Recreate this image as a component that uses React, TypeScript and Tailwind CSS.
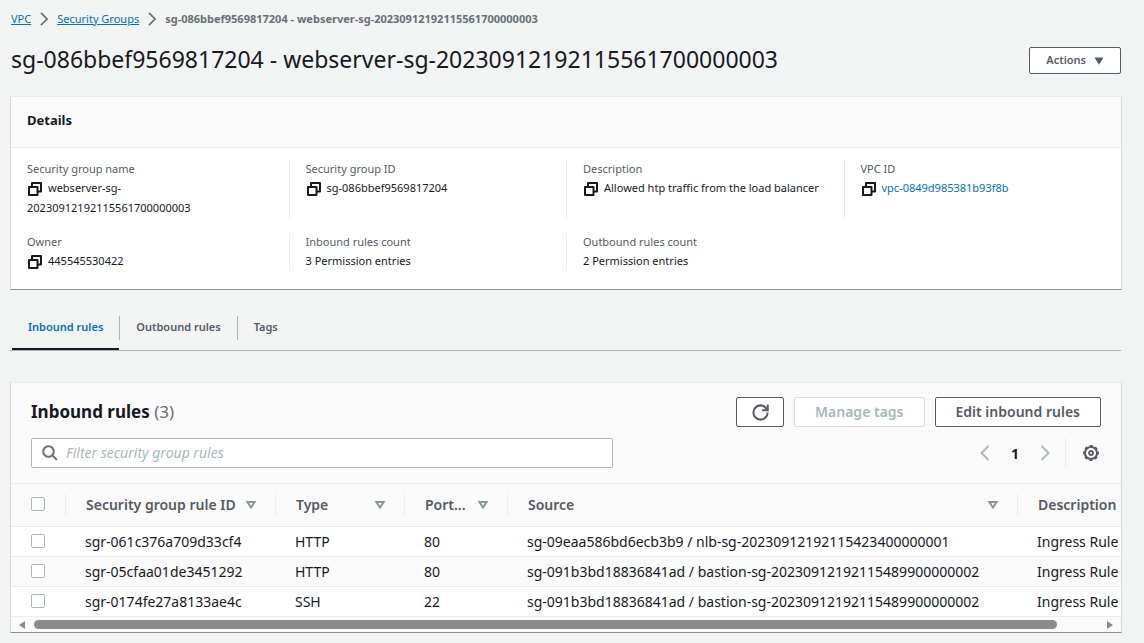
import React from "react";

type IconProps = { className?: string };

function CopyIcon() {
  return (
    <svg viewBox="0 0 16 16" className="mr-[5px] inline-block size-4 align-[-5px]" fill="none" stroke="#16191f" strokeWidth="2" strokeLinejoin="round">
      <path d="M2 6h8.500v8H2z" />
      <path d="M5 5V2h9v8.500h-3" />
    </svg>
  );
}

function ChevronIcon({ className = "" }: IconProps) {
  return (
    <svg viewBox="0 0 16 16" className={className} fill="none" stroke="currentColor" strokeWidth="2">
      <path d="M4.500 1 11.500 8l-7 7" />
    </svg>
  );
}

function RefreshIcon() {
  return (
    <svg viewBox="0 0 16 16" className="size-[17px]" fill="none" stroke="currentColor" strokeWidth="1.900">
      <path d="M14.700 8A6.700 6.700 0 1 1 8 1.300c2.700 0 4.800 1.500 5.900 4" />
      <path d="M14.800.5v5.300H9.500" />
    </svg>
  );
}

function SearchIcon() {
  return (
    <svg viewBox="0 0 16 16" className="size-4 shrink-0 text-[#687078]" fill="none" stroke="currentColor" strokeWidth="2">
      <circle cx="6.500" cy="6.500" r="5.300" />
      <path d="m10.300 10.300 4.600 4.600" />
    </svg>
  );
}

function GearIcon() {
  return (
    <svg viewBox="0 0 16 16" className="size-4" fill="none" stroke="currentColor">
      <circle cx="8" cy="8" r="6" strokeWidth="2" />
      <circle cx="8" cy="8" r="7.200" strokeWidth="1.500" strokeDasharray="3.200 2.455" strokeDashoffset="1.600" />
      <circle cx="8" cy="8" r="2" strokeWidth="1.800" />
    </svg>
  );
}

function SortIcon() {
  return (
    <svg viewBox="0 0 12 12" className="size-3 shrink-0" fill="none" stroke="#879596" strokeWidth="2">
      <path d="M2.400 3h7.200L6 8.500z" />
    </svg>
  );
}

type Detail = { label: string; value: string; copy?: boolean; link?: boolean };

const detailRows: Detail[][] = [
  [
    { label: "Security group name", value: "webserver-sg-20230912192115561700000003", copy: true },
    { label: "Security group ID", value: "sg-086bbef9569817204", copy: true },
    { label: "Description", value: "Allowed htp traffic from the load balancer", copy: true },
    { label: "VPC ID", value: "vpc-0849d985381b93f8b", copy: true, link: true },
  ],
  [
    { label: "Owner", value: "445545530422", copy: true },
    { label: "Inbound rules count", value: "3 Permission entries" },
    { label: "Outbound rules count", value: "2 Permission entries" },
  ],
];

const columns = [
  { title: "Security group rule ID", width: "w-[210px]", sortable: true },
  { title: "Type", width: "w-[129px]", sortable: true },
  { title: "Port...", width: "w-[103px]", sortable: true },
  { title: "Source", width: "w-[510px]", sortable: true },
  { title: "Description", width: "", sortable: false },
];

const rules = [
  ["sgr-061c376a709d33cf4", "HTTP", "80", "sg-09eaa586bd6ecb3b9 / nlb-sg-20230912192115423400000001", "Ingress Rule"],
  ["sgr-05cfaa01de3451292", "HTTP", "80", "sg-091b3bd18836841ad / bastion-sg-20230912192115489900000002", "Ingress Rule"],
  ["sgr-0174fe27a8133ae4c", "SSH", "22", "sg-091b3bd18836841ad / bastion-sg-20230912192115489900000002", "Ingress Rule"],
];

const panel = "border border-x-[#d5dbdb] border-t-[#eaeded] border-b-[#879596] bg-white";

function Checkbox({ label }: { label: string }) {
  return (
    <input
      type="checkbox"
      aria-label={label}
      className="mb-[2px] block size-[14px] appearance-none rounded-[2px] border border-[#aab7b8] bg-white checked:bg-[#0073bb]"
    />
  );
}

export default function App() {
  return (
    <div className="min-h-screen overflow-x-hidden bg-[#f2f3f3] pr-[22px] pb-[10px] pl-[10px] font-['Noto_Sans',sans-serif] text-[#16191f]">
      <nav aria-label="Breadcrumb" className="flex h-[38px] items-center gap-[6px] pl-px text-[11px]">
        <a href="#vpc" className="text-[#0073bb] underline">VPC</a>
        <ChevronIcon className="size-[14px] text-[#687078]" />
        <a href="#groups" className="text-[#0073bb] underline">Security Groups</a>
        <ChevronIcon className="size-[14px] text-[#687078]" />
        <span className="font-bold text-[#687078]">sg-086bbef9569817204 - webserver-sg-20230912192115561700000003</span>
      </nav>

      <header className="flex h-[58px] items-start justify-between px-px">
        <h1 className="pt-[3px] text-[23px] leading-9">sg-086bbef9569817204 - webserver-sg-20230912192115561700000003</h1>
        <button type="button" className="mt-[9px] flex h-[27px] items-center gap-2 rounded-[2px] border border-[#545b64] bg-white px-4 text-[11px] font-semibold text-[#545b64]">
          Actions
          <svg viewBox="0 0 10 8" className="h-2 w-[10px]" fill="currentColor">
            <path d="M.5.500h9L5 7.800z" />
          </svg>
        </button>
      </header>

      <section className={panel}>
        <h2 className="flex h-[51px] items-center border-b border-[#eaeded] bg-[#fafafa] px-4 pb-[2px] text-[13px] font-bold">Details</h2>
        <div className="flex flex-col gap-[15px] pt-3 pb-[18px]">
          {detailRows.map((row, r) => (
            <dl key={r} className="grid grid-cols-4">
              {row.map((d, i) => (
                <div key={d.label} className={i === 0 ? "px-4" : "border-l border-[#eaeded] px-4"}>
                  <dt className="text-[11px] leading-[18px] text-[#545b64]">{d.label}</dt>
                  <dd className="text-[11px] leading-5">
                    {d.copy && <CopyIcon />}
                    {d.link ? <a href="#vpc-detail" className="text-[#0073bb]">{d.value}</a> : d.value}
                  </dd>
                </div>
              ))}
            </dl>
          ))}
        </div>
      </section>

      <div role="tablist" className="mt-[23px] mb-[31px] mr-px flex items-start border-b border-[#aab7b8] pl-[2px] text-[11px] font-semibold text-[#545b64]">
        <button type="button" role="tab" aria-selected="true" className="h-[37px] border-b-2 border-[#16191f] px-4 pb-[6px] text-[#0073bb]">Inbound rules</button>
        <button type="button" role="tab" aria-selected="false" className="mt-[3px] h-6 border-x border-[#aab7b8] px-4 pb-px">Outbound rules</button>
        <button type="button" role="tab" aria-selected="false" className="mt-[3px] h-6 px-4 pb-px">Tags</button>
      </div>

      <section className={panel}>
        <div className="bg-[#fafafa] px-5 pt-[14px] pb-[15px]">
          <div className="flex items-center justify-between">
            <h2 className="text-[17px] font-bold">
              Inbound rules <span className="font-normal text-[#687078]">(3)</span>
            </h2>
            <div className="flex gap-[10px] text-[14px] font-semibold">
              <button type="button" aria-label="Refresh" className="flex h-[30px] w-12 items-center justify-center rounded-[2px] border border-[#545b64] bg-white text-[#545b64]">
                <RefreshIcon />
              </button>
              <button type="button" disabled className="h-[30px] rounded-[2px] border border-[#d5dbdb] bg-white px-5 pb-px text-[#aab7b8]">Manage tags</button>
              <button type="button" className="h-[30px] rounded-[2px] border border-[#545b64] bg-white px-5 pb-px text-[#545b64]">Edit inbound rules</button>
            </div>
          </div>
          <div className="mt-[11px] flex items-center justify-between">
            <label className="flex h-[30px] w-[582px] items-center gap-2 rounded-[2px] border border-[#aab7b8] bg-white px-[10px]">
              <SearchIcon />
              <input
                type="text"
                aria-label="Filter security group rules"
                placeholder="Filter security group rules"
                className="min-w-0 flex-1 pb-px text-[14px] outline-none placeholder:text-[#aab7b8] placeholder:italic"
              />
            </label>
            <div className="flex items-center text-[#aab7b8]">
              <button type="button" aria-label="Previous page"><ChevronIcon className="size-4 rotate-180" /></button>
              <span className="w-11 text-center text-[14px] font-bold text-[#16191f]">1</span>
              <button type="button" aria-label="Next page"><ChevronIcon className="size-4" /></button>
              <span className="mx-3 h-[30px] border-l border-[#eaeded]" />
              <button type="button" aria-label="Preferences" className="pr-[2px] pl-[5px] text-[#545b64]"><GearIcon /></button>
            </div>
          </div>
        </div>

        <div className="overflow-hidden">
          <table className="w-full min-w-[1160px] table-fixed border-collapse text-left text-[14px] leading-5">
            <thead>
              <tr className="h-[43px] border-y border-[#eaeded] bg-[#fafafa] text-[#545b64]">
                <th className="w-[54px] py-0 pl-5"><Checkbox label="Select all rules" /></th>
                {columns.map((c) => (
                  <th key={c.title} className={`${c.width} p-0 font-semibold`}>
                    <div className="flex h-[22px] items-center justify-between border-l border-[#eaeded] pr-[18px] pl-5 whitespace-nowrap">
                      {c.title}
                      {c.sortable && <SortIcon />}
                    </div>
                  </th>
                ))}
              </tr>
            </thead>
            <tbody>
              {rules.map((rule) => (
                <tr key={rule[0]} className="h-[30px] border-b border-[#eaeded] even:bg-[#fafafa]">
                  <td className="py-0 pl-5"><Checkbox label={rule[0]} /></td>
                  {rule.map((cell, i) => (
                    <td key={i} className="py-0 pl-5 whitespace-nowrap">{cell}</td>
                  ))}
                </tr>
              ))}
            </tbody>
          </table>
        </div>
        <div aria-hidden="true" className="flex h-[15px] items-center justify-between bg-[#fafafa] px-2 text-[#8b8b8b]">
          <svg viewBox="0 0 6 8" className="h-2 w-[6px]" fill="currentColor"><path d="M6 0v8L0 4z" /></svg>
          <div className="mr-[50px] ml-[9px] h-[9px] flex-1 rounded-full bg-[#8b8b8b]" />
          <svg viewBox="0 0 6 8" className="h-2 w-[6px]" fill="currentColor"><path d="M0 0v8l6-4z" /></svg>
        </div>
      </section>
    </div>
  );
}
